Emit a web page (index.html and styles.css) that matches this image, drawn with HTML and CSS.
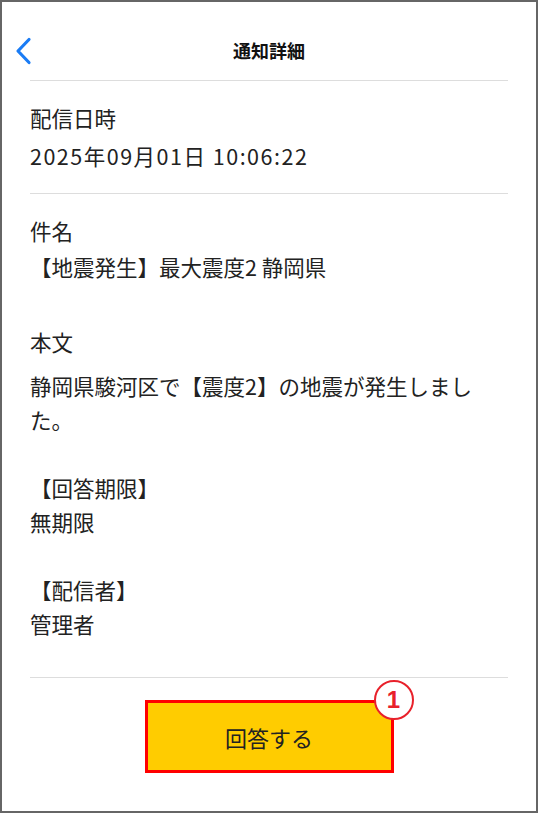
FILE: index.html
```html
<!DOCTYPE html>
<html lang="ja">
<head>
    <meta charset="UTF-8">
    <meta name="viewport" content="width=device-width, initial-scale=1.0">
    <title>通知詳細</title>
    <link rel="stylesheet" href="styles.css">
</head>
<body>
    <div class="screen">
        <header class="nav">
            <a class="back" href="#">
                <svg width="18" height="28" viewBox="0 0 18 28">
                    <path d="M15 2.5 L4 14 L15 25.5" fill="none" stroke="#1a7cf5" stroke-width="3.2" stroke-linecap="round" stroke-linejoin="round"/>
                </svg>
            </a>
            <h1>通知詳細</h1>
        </header>

        <main class="detail">
            <section class="field field-date">
                <p class="label">配信日時</p>
                <p class="value date">2025年09月01日 10:06:22</p>
            </section>

            <section class="field field-subject">
                <p class="label">件名</p>
                <p class="value">【地震発生】最大震度2 静岡県</p>
            </section>

            <section class="field field-body">
                <p class="label">本文</p>
                <p class="body-text">静岡県駿河区で【震度2】の地震が発生しました。

【回答期限】
無期限

【配信者】
管理者</p>
            </section>
        </main>

        <footer class="actions">
            <button class="answer">回答する<span class="badge">1</span></button>
        </footer>
    </div>
</body>
</html>
```

FILE: styles.css
```css
body {
    margin: 0;
    padding: 0;
    font-family: "Noto Sans CJK JP", sans-serif;
    color: #222;
    background: #fff;
}

.screen {
    width: 538px;
    height: 813px;
    box-sizing: border-box;
    border: 2px solid #666;
    display: flex;
    flex-direction: column;
}

.nav {
    height: 78px;
    box-sizing: border-box;
    padding-top: 18px;
    display: flex;
    align-items: center;
    justify-content: center;
    position: relative;
}

.back {
    position: absolute;
    left: 12px;
    top: 35px;
    display: block;
    line-height: 0;
}

.nav h1 {
    margin: 0;
    font-size: 18px;
    font-weight: 700;
    line-height: 24px;
    color: #111;
}

.detail {
    margin: 0 28px;
}

.field p {
    margin: 0;
    font-size: 21.5px;
    line-height: 34px;
}

.field-date {
    border-top: 1px solid #ddd;
    padding: 20px 0 20px;
}

.field-date .value {
    margin-top: 4px;
}

.date {
    letter-spacing: 1.5px;
}

.field-subject {
    border-top: 1px solid #ddd;
    padding-top: 20px;
}

.field-subject .value {
    margin-top: 2px;
}

.field-body {
    padding: 41px 0 36px;
}

.field-body .body-text {
    margin-top: 10px;
    max-width: 465px;
    white-space: pre-wrap;
}

.actions {
    margin: 0 28px;
    border-top: 1px solid #ddd;
    padding-top: 22px;
    display: flex;
    justify-content: center;
}

.answer {
    position: relative;
    width: 249px;
    height: 73px;
    background-color: #ffcc00;
    border: 3px solid #ff0000;
    font-family: "Noto Sans CJK JP", sans-serif;
    font-size: 22px;
    color: #222;
    padding: 0;
    cursor: pointer;
}

.badge {
    position: absolute;
    top: -23px;
    right: -23px;
    width: 36px;
    height: 36px;
    border: 2px solid #e8212b;
    border-radius: 50%;
    background: #fff;
    color: #e8212b;
    font-family: "Liberation Sans", sans-serif;
    font-weight: 700;
    font-size: 24px;
    line-height: 36px;
    text-align: center;
}
```
